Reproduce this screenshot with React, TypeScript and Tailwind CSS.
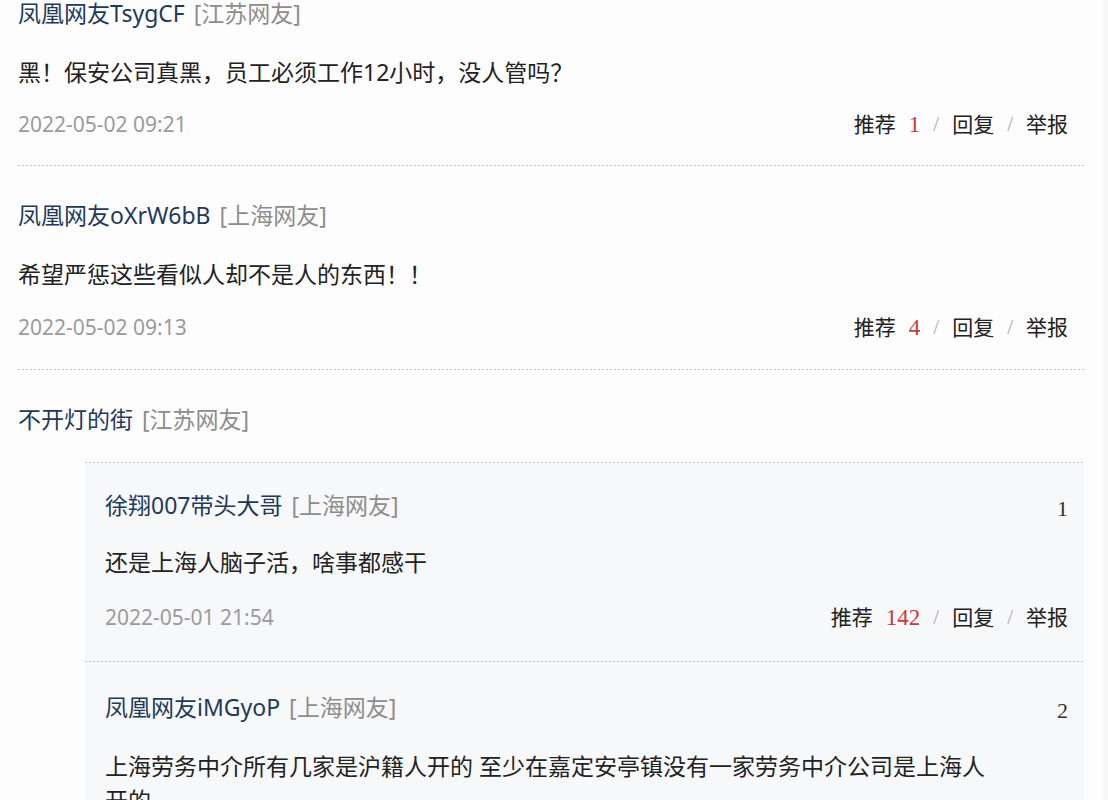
import React from "react";

function Dots() {
  return (
    <div className="h-px w-full bg-[linear-gradient(to_right,#c2c2c2_50%,transparent_50%)] bg-[length:4px_1px] bg-repeat-x" />
  );
}

function Name({ name, loc, floor, first }: { name: string; loc: string; floor?: string; first?: boolean }) {
  return (
    <div
      className={
        first
          ? "flex h-[26px] items-center justify-between pr-[16px]"
          : "flex h-[30px] items-center justify-between pr-[16px]"
      }
    >
      <div className="flex items-center text-[23px] leading-[26px]">
        <span className="text-[#22395a]">{name}</span>
        <span className="ml-[9px] text-[#8d8d8d]">[{loc}]</span>
      </div>
      {floor && (
        <span className="mt-[6px] font-['Liberation_Serif',serif] text-[22px] text-[#333]">{floor}</span>
      )}
    </div>
  );
}

function Actions({ date, likes }: { date: string; likes: string }) {
  return (
    <div className="flex h-[30px] items-center justify-between pr-[16px]">
      <span className="text-[21px] text-[#9b9b9b]">{date}</span>
      <div className="flex items-center gap-[13px] text-[21px] text-[#222]">
        <span>推荐</span>
        <span className="font-['Liberation_Serif',serif] text-[23px] text-[#c8393b]">{likes}</span>
        <span className="font-['Liberation_Serif',serif] text-[#aaa]">/</span>
        <span>回复</span>
        <span className="font-['Liberation_Serif',serif] text-[#aaa]">/</span>
        <span>举报</span>
      </div>
    </div>
  );
}

export default function App() {
  return (
    <div className="flex h-[800px] w-[1108px] overflow-hidden bg-[#fdfdfe] font-['Noto_Sans','Noto_Sans_CJK_SC',sans-serif]">
      <div className="w-[1103px] pl-[18px] pr-[19px]">
        <div>
          {/* item 1 */}
          <div className="pb-[25px]">
            <Name name="凤凰网友TsygCF" loc="江苏网友" first />
            <div className="mt-[31px] h-[30px] text-[23px] leading-[30px] text-[#222]">
              黑！保安公司真黑，员工必须工作12小时，没人管吗？
            </div>
            <div className="mt-[23px]">
              <Actions date="2022-05-02 09:21" likes="1" />
            </div>
          </div>
          <Dots />
          {/* item 2 */}
          <div className="pb-[26px] pt-[34px]">
            <Name name="凤凰网友oXrW6bB" loc="上海网友" />
            <div className="mt-[29px] h-[30px] text-[23px] leading-[30px] text-[#222]">
              希望严惩这些看似人却不是人的东西！！
            </div>
            <div className="mt-[24px]">
              <Actions date="2022-05-02 09:13" likes="4" />
            </div>
          </div>
          <Dots />
          {/* item 3 */}
          <div className="pt-[34px]">
            <Name name="不开灯的街" loc="江苏网友" />
            <div className="ml-[67px] mt-[28px] bg-[#f7f8fa]">
              <Dots />
              <div className="pb-[28px] pl-[20px] pt-[27px]">
                <Name name="徐翔007带头大哥" loc="上海网友" floor="1" />
                <div className="mt-[27px] h-[30px] text-[23px] leading-[30px] text-[#222]">
                  还是上海人脑子活，啥事都感干
                </div>
                <div className="mt-[26px]">
                  <Actions date="2022-05-01 21:54" likes="142" />
                </div>
              </div>
              <Dots />
              <div className="pl-[20px] pt-[30px]">
                <Name name="凤凰网友iMGyoP" loc="上海网友" floor="2" />
                <div className="mt-[27px] text-[23px] leading-[34px] text-[#222]">
                  上海劳务中介所有几家是沪籍人开的 至少在嘉定安亭镇没有一家劳务中介公司是上海人
                  <br />
                  开的
                </div>
              </div>
            </div>
          </div>
        </div>
      </div>
      <div className="h-full flex-1 bg-[#f6f6f7]" />
    </div>
  );
}
